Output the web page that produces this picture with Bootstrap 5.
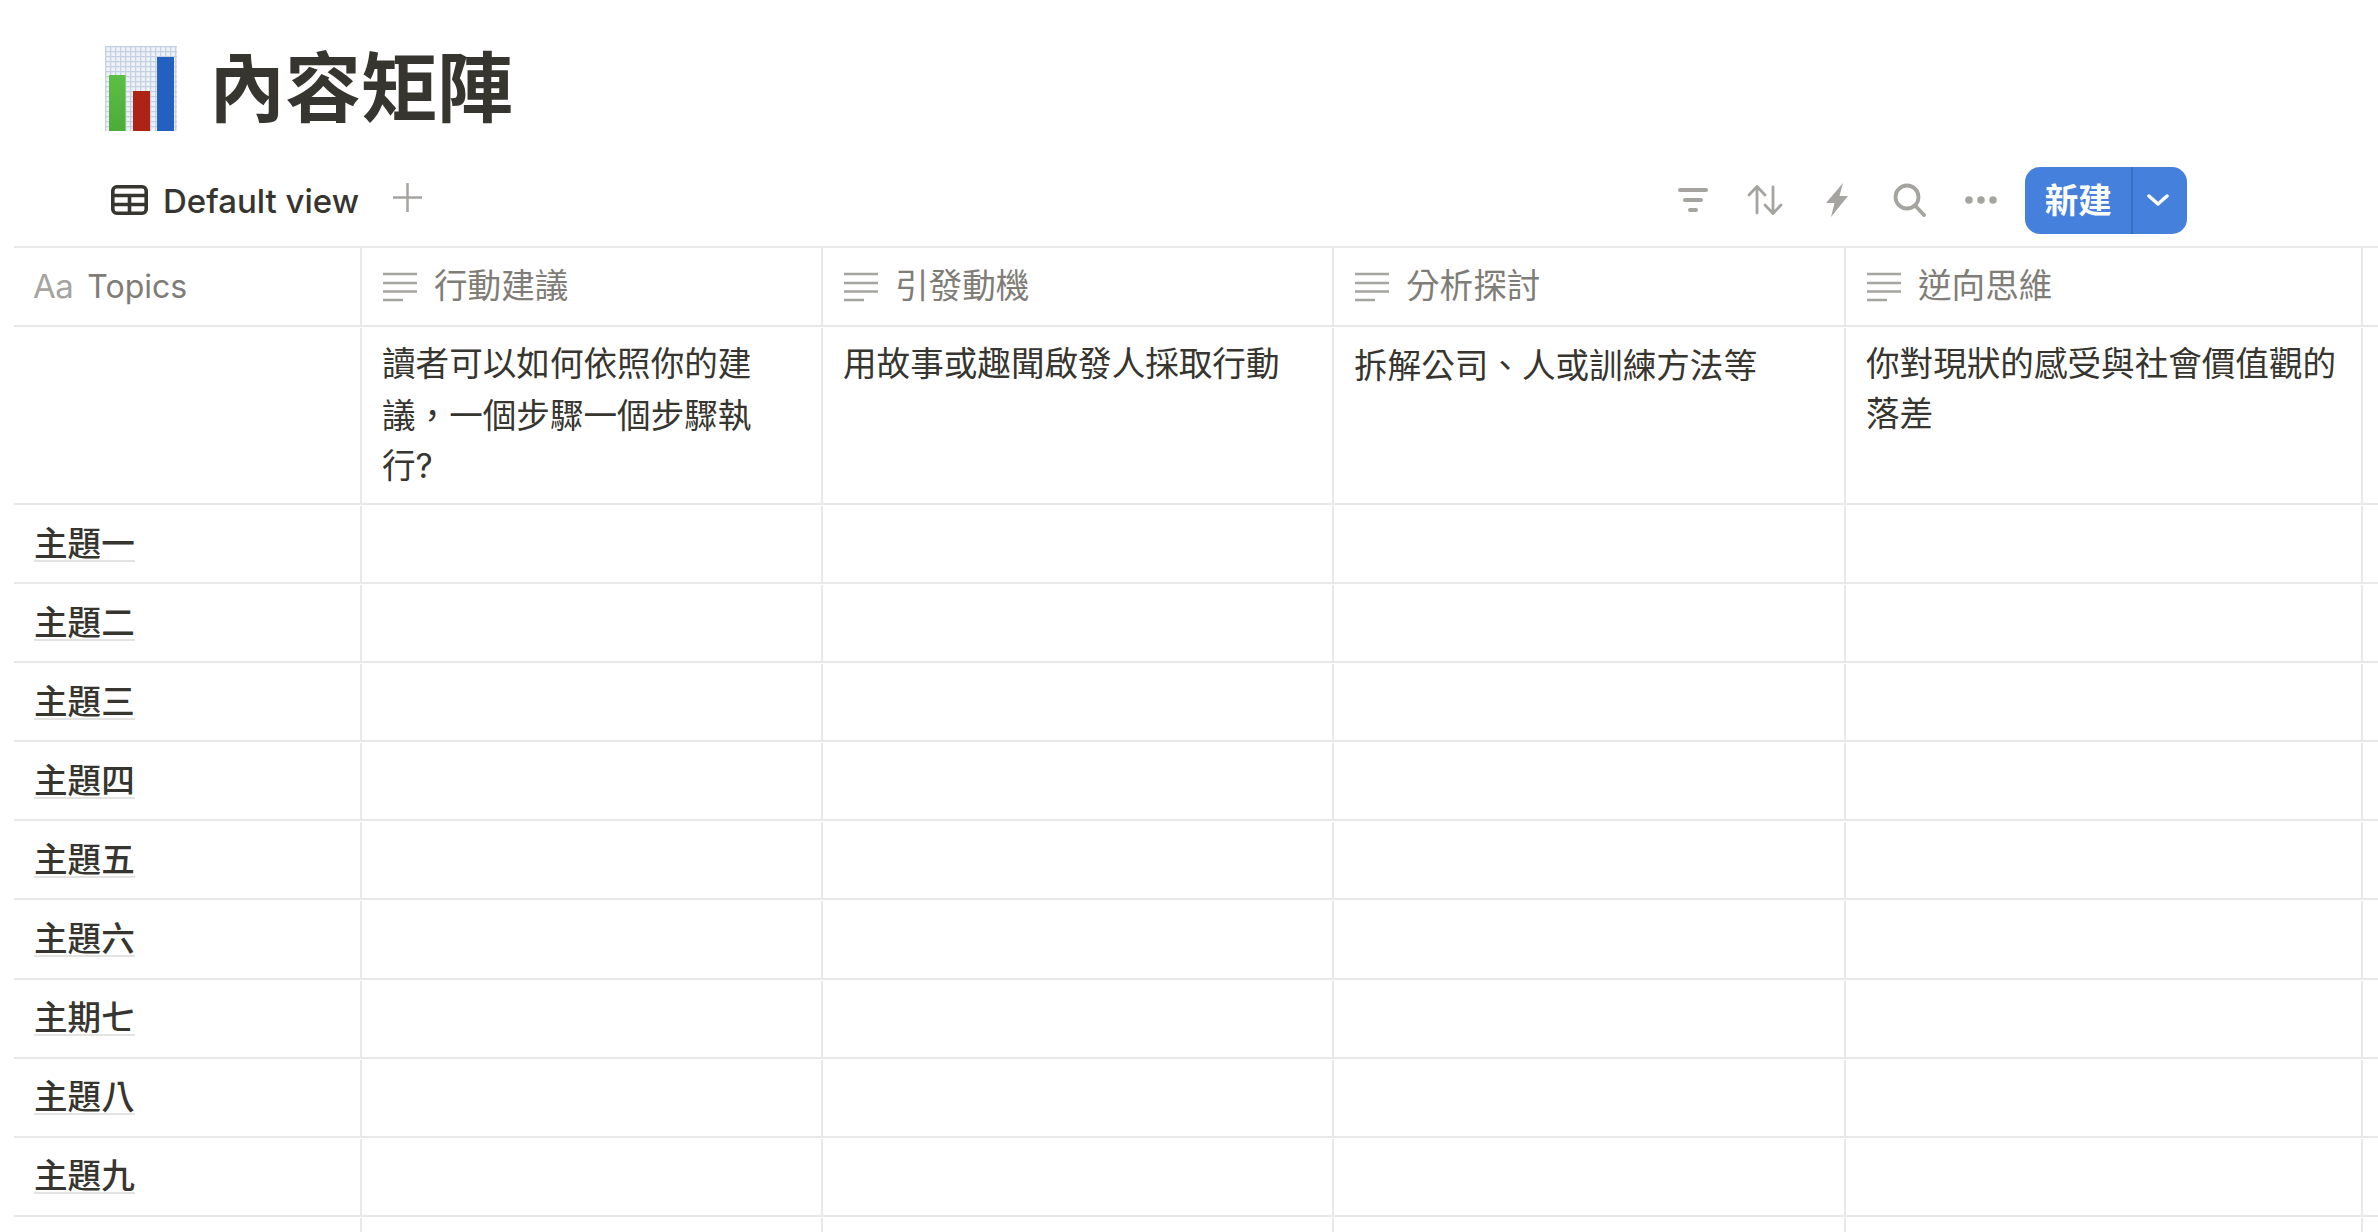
<!DOCTYPE html>
<html lang="zh-Hant">
<head>
<meta charset="utf-8">
<title>內容矩陣</title>
<link rel="stylesheet" href="https://cdn.jsdelivr.net/npm/bootstrap@5.3.0/dist/css/bootstrap.min.css">
<style>
html,body{height:100%;overflow:hidden;background:#fff}
body{font-family:Inter,"Noto Sans CJK TC",sans-serif;color:#37352f;font-size:33.6px}
.title-row{padding:46px 0 0 105px;height:165px;gap:32px}
.page-title{font-size:76px;font-weight:700;line-height:84px;margin:0;color:#37352f}
.tool-row{height:81px;padding:0 191px 11px 111px}
.tab-name{font-size:33px;font-weight:500;margin:2px 0 0 15px;line-height:40px}
.add-view{margin-left:34px;margin-top:-5px}
.tools{gap:36px;margin-right:26px}
.tools svg{display:block}
.new-group{height:67px;width:162px;border-radius:15px;overflow:hidden}
.new-group .btn{background:#4480dc;border:0;border-radius:0;color:#fff;font-weight:700;font-size:33.6px;line-height:67px;padding:0;box-shadow:none}
.new-main{width:106px}
.new-group .new-more{width:56px;border-left:2px solid #3a70c2;padding-right:3px}
.sheet{margin-left:14px;border-collapse:separate;border-spacing:0;table-layout:fixed;width:2364px}
.sheet td,.sheet th{padding:0;border-bottom:2px solid #e9e9e8;vertical-align:top;font-weight:400}
.sheet thead th{border-top:2px solid #e9e9e8}
.box{margin-top:1px;border-right:2px solid #e9e9e8;padding:0 19px 0 21px}
.sheet thead .box{margin-top:0;height:77px;color:#7f7d78;display:flex;align-items:center;gap:17px;font-size:33.6px}
.sheet .note{height:175px;padding:11px 19px 0 20px;line-height:50px;font-size:33.6px}
.sheet .line{height:76.1px;display:flex;align-items:center}
.sheet .edge{border-right:0}
.sheet .name-cell{padding:0 0 3px 20px}
.name{font-weight:500;font-size:33.6px;line-height:40px;border-bottom:2px solid #e3e3e2;display:inline-block;height:38px}
.sheet thead .topic-head{font-size:32px;padding-left:19px;gap:14px}
.aa{color:#a5a4a0;font-size:33px;letter-spacing:-.5px}
.cn-mark{font-family:"Noto Sans CJK SC",sans-serif}
</style>
</head>
<body>
<div class="d-flex align-items-start title-row">
  <svg width="72" height="85" viewBox="0 0 72 85" aria-hidden="true">
    <defs>
      <pattern id="grid" width="5" height="5" patternUnits="userSpaceOnUse">
        <rect width="5" height="5" fill="#eef1f6"/>
        <path d="M0 .5H5M.5 0V5" stroke="#c5d1e2" stroke-width="1.500"/>
      </pattern>
      <linearGradient id="green" x1="0" y1="0" x2="0" y2="1"><stop offset="0" stop-color="#5cbf45"/><stop offset="1" stop-color="#4bac38"/></linearGradient>
    </defs>
    <rect width="72" height="85" fill="url(#grid)"/>
    <rect x="4" y="29" width="16.500" height="56" fill="url(#green)"/>
    <rect x="28" y="45" width="17" height="40" fill="#ad2417"/>
    <rect x="52" y="11" width="17" height="74" fill="#2360bf"/>
  </svg>
  <h1 class="page-title">內容矩陣</h1>
</div>

<div class="d-flex align-items-center tool-row">
  <svg width="37" height="30" viewBox="0 0 37 30" aria-hidden="true" fill="none" stroke="#37352f" stroke-width="3.600">
    <rect x="1.800" y="1.800" width="33.400" height="26.400" rx="4"/>
    <path d="M1.800 10.500H35.500M1.800 19.500H35.500M18.500 10.500V28.500"/>
  </svg>
  <span class="tab-name">Default view</span>
  <svg class="add-view" width="29" height="29" viewBox="0 0 29 29" aria-hidden="true" stroke="#a5a4a0" stroke-width="2.500">
    <path d="M0 14.500H29M14.500 0V29"/>
  </svg>
  <div class="d-flex align-items-center ms-auto tools">
    <svg width="36" height="34" viewBox="0 0 36 34" aria-hidden="true" stroke="#a5a4a0" stroke-width="4" stroke-linecap="round">
      <path d="M5 7H31M10 17H26M15 27H21"/>
    </svg>
    <svg width="36" height="34" viewBox="0 0 36 34" aria-hidden="true" fill="none" stroke="#a5a4a0" stroke-width="2.800" stroke-linecap="round" stroke-linejoin="round">
      <path d="M10 30V4M2 12L10 3.500L18 12M26 4V30M18 22L26 30.500L34 22"/>
    </svg>
    <svg width="36" height="34" viewBox="0 0 36 34" aria-hidden="true" fill="#a5a4a0">
      <path d="M24 0L7 20H15.500L12 34L29 13H20.500Z"/>
    </svg>
    <svg width="36" height="34" viewBox="0 0 36 34" aria-hidden="true" fill="none" stroke="#a5a4a0" stroke-width="3.800" stroke-linecap="round">
      <circle cx="16" cy="14" r="11.500"/>
      <path d="M24.500 23L33 32"/>
    </svg>
    <svg width="36" height="34" viewBox="0 0 36 34" aria-hidden="true" fill="#a5a4a0">
      <circle cx="6" cy="17" r="3.800"/><circle cx="18" cy="17" r="3.800"/><circle cx="30" cy="17" r="3.800"/>
    </svg>
  </div>
  <div class="btn-group new-group">
    <button type="button" class="btn btn-primary new-main">新建</button>
    <button type="button" class="btn btn-primary new-more d-flex align-items-center justify-content-center" aria-label="更多">
      <svg width="22" height="12" viewBox="0 0 22 12" aria-hidden="true" fill="none" stroke="#fff" stroke-width="3.400" stroke-linecap="round" stroke-linejoin="round"><path d="M2 2L11 10L20 2"/></svg>
    </button>
  </div>
</div>

<table class="sheet">
  <colgroup><col style="width:348px"><col style="width:461px"><col style="width:511px"><col style="width:512px"><col style="width:517px"><col></colgroup>
  <thead>
    <tr>
      <th><div class="box topic-head"><span class="aa">Aa</span><span>Topics</span></div></th>
      <th><div class="box"><svg width="34" height="30" viewBox="0 0 34 30" aria-hidden="true" stroke="#a5a4a0" stroke-width="2.600"><path d="M0 2H34M0 11H34M0 19.500H34M0 28H20"/></svg><span>行動建議</span></div></th>
      <th><div class="box"><svg width="34" height="30" viewBox="0 0 34 30" aria-hidden="true" stroke="#a5a4a0" stroke-width="2.600"><path d="M0 2H34M0 11H34M0 19.500H34M0 28H20"/></svg><span>引發動機</span></div></th>
      <th><div class="box"><svg width="34" height="30" viewBox="0 0 34 30" aria-hidden="true" stroke="#a5a4a0" stroke-width="2.600"><path d="M0 2H34M0 11H34M0 19.500H34M0 28H20"/></svg><span>分析探討</span></div></th>
      <th><div class="box"><svg width="34" height="30" viewBox="0 0 34 30" aria-hidden="true" stroke="#a5a4a0" stroke-width="2.600"><path d="M0 2H34M0 11H34M0 19.500H34M0 28H20"/></svg><span>逆向思維</span></div></th>
      <th><div class="box edge"></div></th>
    </tr>
  </thead>
  <tbody>
    <tr>
      <td><div class="box note"></div></td>
      <td><div class="box note">讀者可以如何依照你的建<br>議<span class="cn-mark">，</span>一個步驟一個步驟執<br>行?</div></td>
      <td><div class="box note">用故事或趣聞啟發人採取行動</div></td>
      <td><div class="box note">拆解公司<span class="cn-mark">、</span>人或訓練方法等</div></td>
      <td><div class="box note">你對現狀的感受與社會價值觀的落差</div></td>
      <td><div class="box note edge"></div></td>
    </tr>
    <tr><td><div class="box line name-cell"><span class="name">主題一</span></div></td><td><div class="box line"></div></td><td><div class="box line"></div></td><td><div class="box line"></div></td><td><div class="box line"></div></td><td><div class="box line edge"></div></td></tr>
    <tr><td><div class="box line name-cell"><span class="name">主題二</span></div></td><td><div class="box line"></div></td><td><div class="box line"></div></td><td><div class="box line"></div></td><td><div class="box line"></div></td><td><div class="box line edge"></div></td></tr>
    <tr><td><div class="box line name-cell"><span class="name">主題三</span></div></td><td><div class="box line"></div></td><td><div class="box line"></div></td><td><div class="box line"></div></td><td><div class="box line"></div></td><td><div class="box line edge"></div></td></tr>
    <tr><td><div class="box line name-cell"><span class="name">主題四</span></div></td><td><div class="box line"></div></td><td><div class="box line"></div></td><td><div class="box line"></div></td><td><div class="box line"></div></td><td><div class="box line edge"></div></td></tr>
    <tr><td><div class="box line name-cell"><span class="name">主題五</span></div></td><td><div class="box line"></div></td><td><div class="box line"></div></td><td><div class="box line"></div></td><td><div class="box line"></div></td><td><div class="box line edge"></div></td></tr>
    <tr><td><div class="box line name-cell"><span class="name">主題六</span></div></td><td><div class="box line"></div></td><td><div class="box line"></div></td><td><div class="box line"></div></td><td><div class="box line"></div></td><td><div class="box line edge"></div></td></tr>
    <tr><td><div class="box line name-cell"><span class="name">主期七</span></div></td><td><div class="box line"></div></td><td><div class="box line"></div></td><td><div class="box line"></div></td><td><div class="box line"></div></td><td><div class="box line edge"></div></td></tr>
    <tr><td><div class="box line name-cell"><span class="name">主題八</span></div></td><td><div class="box line"></div></td><td><div class="box line"></div></td><td><div class="box line"></div></td><td><div class="box line"></div></td><td><div class="box line edge"></div></td></tr>
    <tr><td><div class="box line name-cell"><span class="name">主題九</span></div></td><td><div class="box line"></div></td><td><div class="box line"></div></td><td><div class="box line"></div></td><td><div class="box line"></div></td><td><div class="box line edge"></div></td></tr>
    <tr><td><div class="box line"></div></td><td><div class="box line"></div></td><td><div class="box line"></div></td><td><div class="box line"></div></td><td><div class="box line"></div></td><td><div class="box line edge"></div></td></tr>
  </tbody>
</table>
<script src="https://cdn.jsdelivr.net/npm/bootstrap@5.3.0/dist/js/bootstrap.bundle.min.js"></script>
</body>
</html>
